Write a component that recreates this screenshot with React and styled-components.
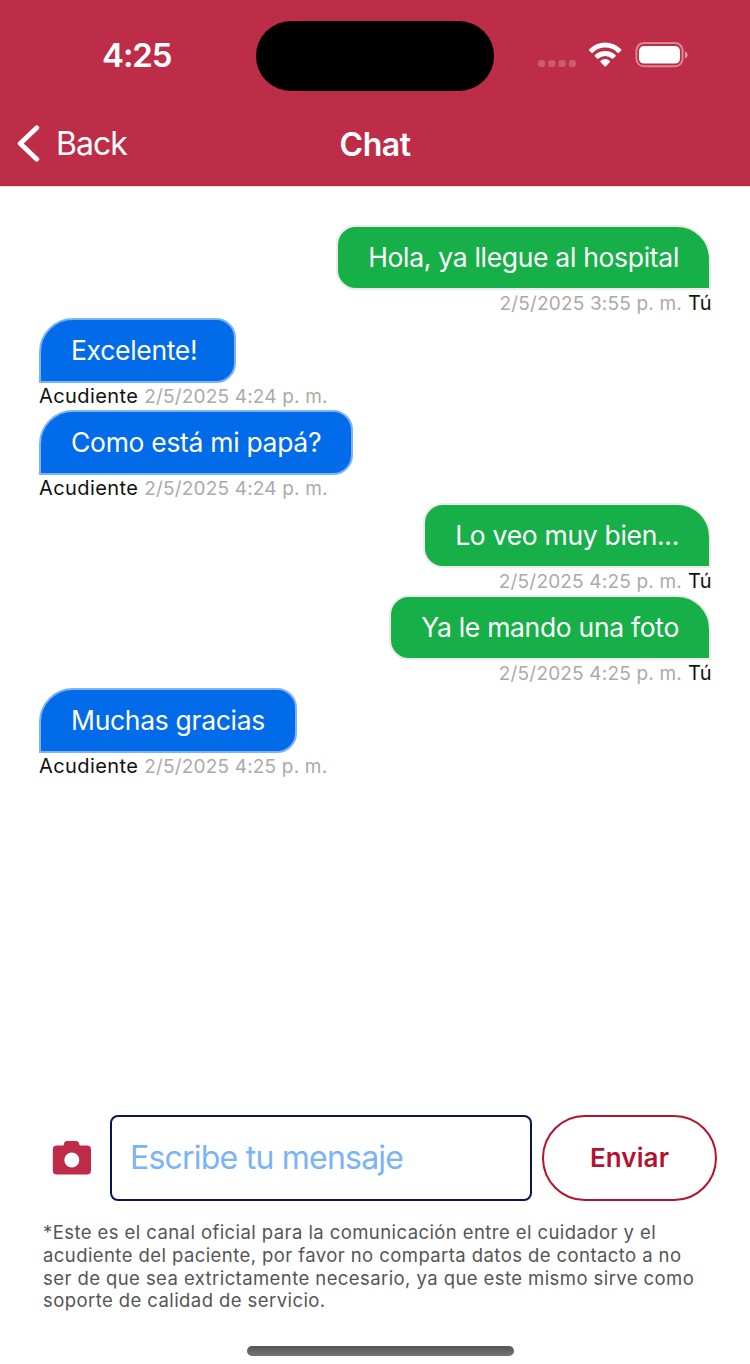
import React from "react";
import styled, { createGlobalStyle } from "styled-components";

const GlobalStyle = createGlobalStyle`
  * {
    box-sizing: border-box;
  }

  body {
    margin: 0;
    background-color: #ffffff;
    font-family: Inter, "Liberation Sans", sans-serif;
    -webkit-font-smoothing: antialiased;
  }
`;

const Screen = styled.div`
  display: flex;
  flex-direction: column;
  width: 750px;
  height: 1364px;
  overflow: hidden;
  background-color: #ffffff;
`;

const Header = styled.header`
  display: flex;
  flex-direction: column;
  height: 186px;
  background-color: #bd2d47;
  box-shadow: 0 1px 0 #ded8d8;
  color: #ffffff;
`;

const StatusBar = styled.div`
  display: grid;
  grid-template-columns: 256px 238px 1fr;
  height: 111px;
`;

const Clock = styled.span`
  padding: 35px 0 0 102px;
  font-size: 33px;
  line-height: 41px;
  font-weight: 600;
  letter-spacing: -1.1px;
`;

const Island = styled.div`
  height: 70px;
  margin-top: 21px;
  border-radius: 35px;
  background-color: #000000;
`;

const StatusIcons = styled.div`
  display: flex;
  align-items: flex-start;
  padding: 40px 0 0 44px;
`;

const NavBar = styled.nav`
  display: grid;
  grid-template-columns: 250px 250px 250px;
  align-items: center;
  height: 66px;
`;

const BackButton = styled.button`
  display: flex;
  align-items: center;
  gap: 16px;
  padding: 0 0 0 16px;
  border: none;
  background: none;
  color: inherit;
  font-family: inherit;
  font-size: 32px;
  line-height: 40px;
  letter-spacing: -1px;
`;

const Title = styled.h1`
  margin: 0;
  padding-top: 1px;
  text-align: center;
  font-size: 32px;
  line-height: 40px;
  font-weight: 600;
  letter-spacing: -0.5px;
`;

const Messages = styled.main`
  flex: 1;
  padding: 39px 39px 0;
`;

const MessageRow = styled.div`
  display: flex;
  flex-direction: column;
  align-items: ${({ $mine }) => ($mine ? "flex-end" : "flex-start")};
  height: 92.5px;
`;

const Bubble = styled.div`
  height: 65px;
  padding: 0 30px;
  border: 2px solid ${({ $mine }) => ($mine ? "#f0e9e9" : "#7db2f5")};
  border-radius: ${({ $mine }) =>
    $mine ? "20px 34px 0 20px" : "34px 20px 20px 0"};
  background-color: ${({ $mine }) => ($mine ? "#17af47" : "#016be9")};
  color: #ffffff;
  font-size: 26.5px;
  line-height: 61px;
  letter-spacing: -0.31px;
  white-space: pre;
`;

const Meta = styled.div`
  display: flex;
  align-items: baseline;
  gap: 6px;
  margin-right: -1px;
  font-size: 20px;
  line-height: 27px;
  white-space: nowrap;
`;

const Author = styled.span`
  color: #111111;
  letter-spacing: 0.4px;
`;

const Timestamp = styled.time`
  color: #aaaaaa;
  font-size: 19px;
  letter-spacing: 0.18px;
`;

const Composer = styled.form`
  display: flex;
  align-items: center;
  height: 86px;
  padding-left: 52px;
`;

const CameraButton = styled.button`
  width: 58px;
  height: 36px;
  padding: 0;
  border: none;
  background: none;
  text-align: left;
`;

const MessageInput = styled.input`
  width: 422px;
  height: 86px;
  padding: 0 18px 2px;
  border: 2px solid #0c1458;
  border-radius: 8px;
  outline: none;
  background-color: #ffffff;
  font-family: inherit;
  font-size: 32px;
  letter-spacing: -0.78px;

  &::placeholder {
    color: #7ab3f7;
    opacity: 1;
  }
`;

const SendButton = styled.button`
  width: 175px;
  height: 86px;
  margin-left: 10px;
  padding: 0 0 2px;
  border: 2px solid #b5122b;
  border-radius: 43px;
  background-color: #ffffff;
  color: #b5122f;
  font-family: inherit;
  font-size: 26px;
  font-weight: 600;
  letter-spacing: 0.1px;
`;

const Disclaimer = styled.p`
  height: 92px;
  margin: 20px 0 0 43px;
  color: #555555;
  font-size: 18.5px;
  line-height: 22.8px;
  letter-spacing: 0.42px;
  white-space: pre-line;
`;

const HomeIndicator = styled.div`
  width: 267px;
  height: 10px;
  margin: 33px auto 8px 247px;
  border-radius: 5px;
  background: linear-gradient(#555555, #747474);
`;

const StatusGlyphs = () => (
  <svg width="156" height="32" viewBox="538 40 156 32" fill="#fff">
    <g opacity="0.22">
      <rect x="538" y="60" width="7" height="7" rx="2.5" />
      <rect x="548.3" y="60" width="7" height="7" rx="2.5" />
      <rect x="558.6" y="60" width="7" height="7" rx="2.5" />
      <rect x="568.9" y="60" width="7" height="7" rx="2.5" />
    </g>
    <path d="M589.3 49.3Q588.6 50 589.3 50.7L591.5 52.8Q592.2 53.4 592.9 52.7Q598 47.6 605.2 47.6T617.5 52.7Q618.2 53.4 618.9 52.8L621.1 50.7Q621.8 50 621.1 49.3Q614.5 42.6 605.2 42.6T589.3 49.3Z" />
    <path d="M594.9 55.1Q594.3 55.8 594.9 56.4L597.2 58.6Q597.9 59.2 598.6 58.6Q601.3 56.1 605.2 56.1T611.8 58.6Q612.5 59.2 613.2 58.6L615.5 56.4Q616.1 55.8 615.5 55.1Q611.2 51 605.2 51T594.9 55.1Z" />
    <path d="M600.7 60.8Q600 61.5 600.7 62.2L604.5 66.3Q605.2 67 605.9 66.3L609.7 62.2Q610.4 61.5 609.7 60.8Q607.8 59.1 605.2 59.1T600.7 60.8Z" />
    <rect x="636.4" y="43.1" width="46.2" height="23.2" rx="7.5" fill="none" stroke="#fff" strokeOpacity="0.42" strokeWidth="2" />
    <rect x="639" y="46" width="41" height="17.6" rx="5" />
    <path d="M685 51.2Q687.7 52.2 687.7 54.9T685 58.5Z" opacity="0.5" />
  </svg>
);

const BackIcon = () => (
  <svg width="24" height="40" viewBox="0 0 24 40" fill="none">
    <path d="M20.8 3.8L4.2 19.5L20.8 35.2" stroke="#fff" strokeWidth="4.8" strokeLinecap="round" strokeLinejoin="round" />
  </svg>
);

const CameraIcon = () => (
  <svg width="40" height="36" viewBox="0 0 40 36">
    <path
      d="M14.5 1H24.5Q26 1 26.8 2.6L27.7 5.6H35Q39 5.6 39 9.6V30.5Q39 34.5 35 34.5H4.8Q0.8 34.5 0.8 30.5V9.6Q0.8 5.6 4.8 5.6H11.5L12.3 2.6Q13 1 14.5 1Z"
      fill="#bd2d47"
    />
    <circle cx="19.8" cy="20" r="7.5" fill="#fff" />
  </svg>
);

const mensajes = [
  { id: 1, mine: true, texto: "Hola, ya llegue al hospital", fecha: "2/5/2025 3:55 p. m." },
  { id: 2, mine: false, texto: "Excelente! ", fecha: "2/5/2025 4:24 p. m." },
  { id: 3, mine: false, texto: "Como está mi papá?", fecha: "2/5/2025 4:24 p. m." },
  { id: 4, mine: true, texto: "Lo veo muy bien...", fecha: "2/5/2025 4:25 p. m." },
  { id: 5, mine: true, texto: "Ya le mando una foto", fecha: "2/5/2025 4:25 p. m." },
  { id: 6, mine: false, texto: "Muchas gracias", fecha: "2/5/2025 4:25 p. m." },
];

const aviso = `*Este es el canal oficial para la comunicación entre el cuidador y el
acudiente del paciente, por favor no comparta datos de contacto a no
ser de que sea extrictamente necesario, ya que este mismo sirve como
soporte de calidad de servicio.`;

const Mensaje = ({ texto, fecha, mine }) => {
  return (
    <MessageRow $mine={mine}>
      <Bubble $mine={mine}>{texto}</Bubble>
      <Meta>
        {!mine && <Author>Acudiente</Author>}
        <Timestamp>{fecha}</Timestamp>
        {mine && <Author>Tú</Author>}
      </Meta>
    </MessageRow>
  );
};

const App = () => {
  return (
    <>
      <GlobalStyle />
      <Screen>
        <Header>
          <StatusBar>
            <Clock>4:25</Clock>
            <Island />
            <StatusIcons>
              <StatusGlyphs />
            </StatusIcons>
          </StatusBar>
          <NavBar>
            <BackButton>
              <BackIcon />
              Back
            </BackButton>
            <Title>Chat</Title>
          </NavBar>
        </Header>
        <Messages>
          {mensajes.map((m) => (
            <Mensaje key={m.id} texto={m.texto} fecha={m.fecha} mine={m.mine} />
          ))}
        </Messages>
        <Composer onSubmit={(e) => e.preventDefault()}>
          <CameraButton type="button" aria-label="Cámara">
            <CameraIcon />
          </CameraButton>
          <MessageInput placeholder="Escribe tu mensaje" />
          <SendButton type="submit">Enviar</SendButton>
        </Composer>
        <Disclaimer>{aviso}</Disclaimer>
        <HomeIndicator />
      </Screen>
    </>
  );
};

export default App;
